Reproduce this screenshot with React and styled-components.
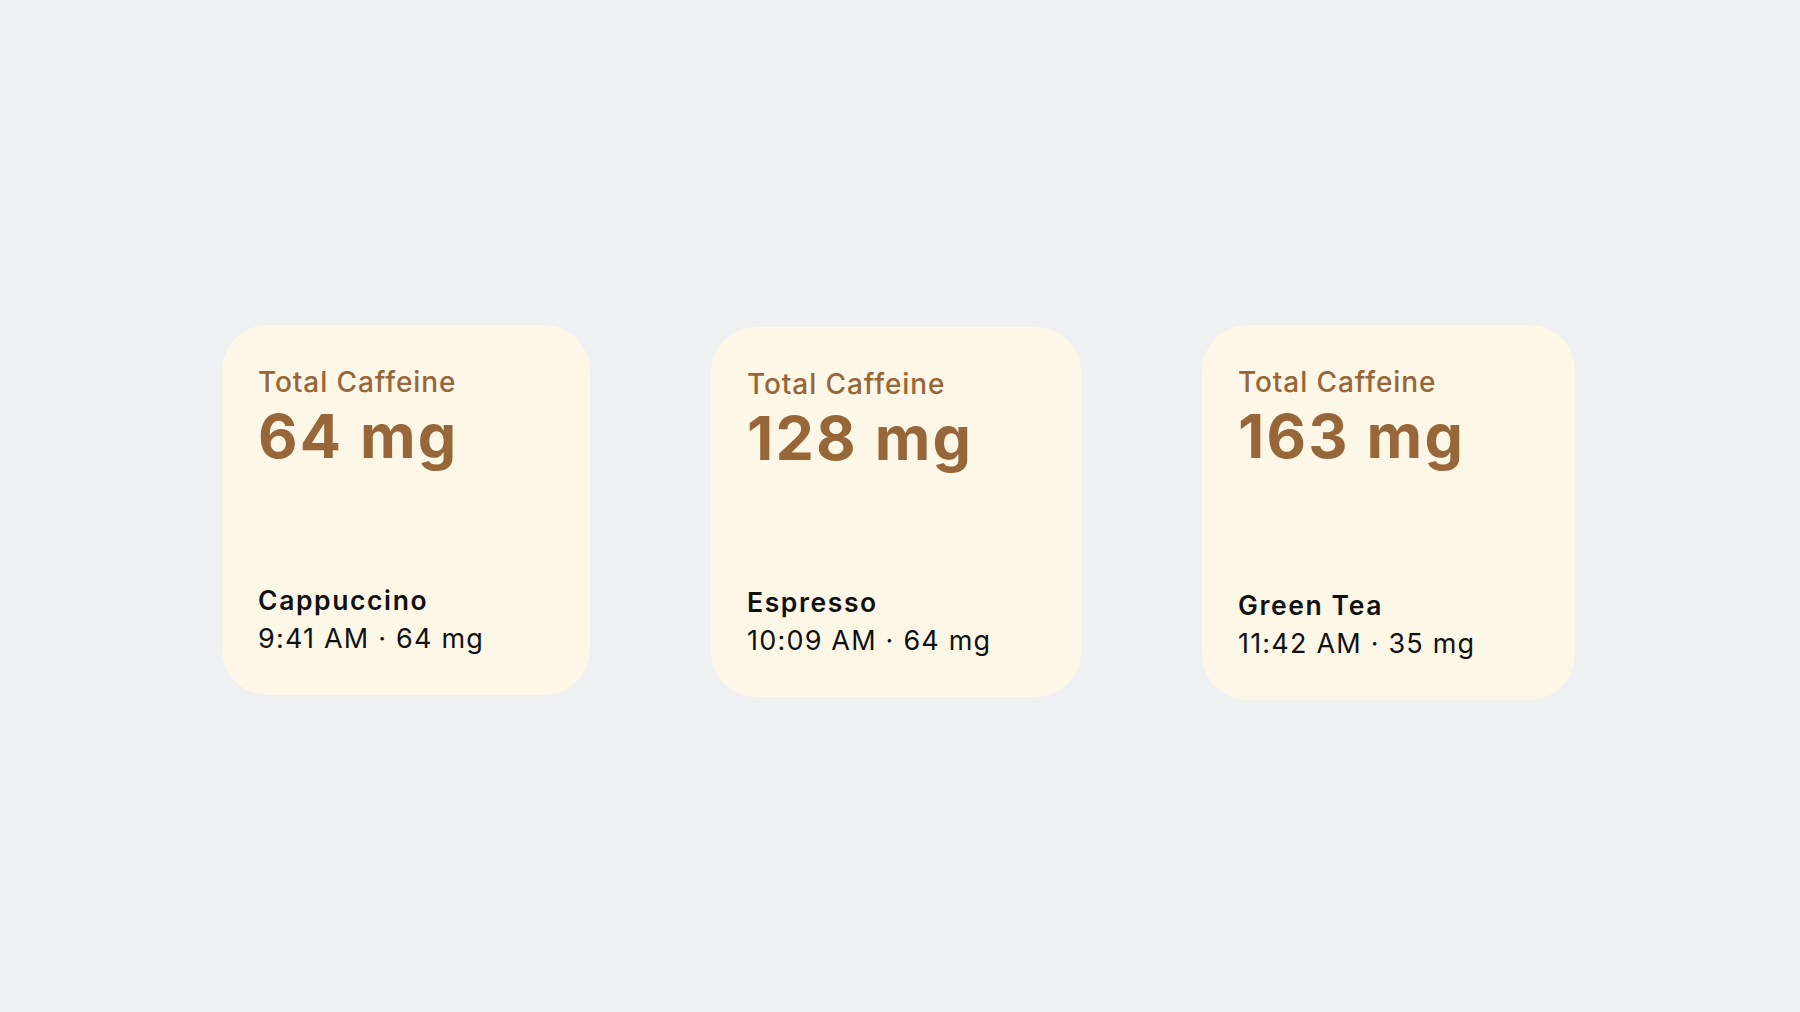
import React from 'react'
import styled, { createGlobalStyle } from 'styled-components'

const GlobalStyle = createGlobalStyle`
    html, body {
        margin: 0;
        padding: 0;
        background: #eff0f2;
    }
    body {
        font-family: Inter, "Noto Sans", "Liberation Sans", sans-serif;
        -webkit-font-smoothing: antialiased;
    }
`;

const drinks = [
    { total: 64, name: 'Cappuccino', time: '9:41 AM', amount: 64, width: 368, height: 370 },
    { total: 128, name: 'Espresso', time: '10:09 AM', amount: 64, width: 370, height: 370, offset: 2 },
    { total: 163, name: 'Green Tea', time: '11:42 AM', amount: 35, width: 373, height: 375 },
];

export default function App() {
    return (
        <Page>
            <GlobalStyle />
            <Row>
                {drinks.map(d => (
                    <Widget key={d.name} $width={d.width} $height={d.height} $offset={d.offset}>
                        <div>
                            <Label>Total Caffeine</Label>
                            <Total>{d.total} mg</Total>
                        </div>
                        <div>
                            <DrinkName>{d.name}</DrinkName>
                            <Detail>{d.time} · {d.amount} mg</Detail>
                        </div>
                    </Widget>
                ))}
            </Row>
        </Page>
    );
}

const Page = styled.main`
    width: 1800px;
    height: 1012px;
    box-sizing: border-box;
    padding-top: 325px;
    background: #eff0f2;
`;

const Row = styled.section`
    display: flex;
    justify-content: center;
    align-items: flex-start;
    gap: 121px;
    padding-right: 3px;
`;

const Widget = styled.article`
    width: ${p => p.$width}px;
    height: ${p => p.$height}px;
    margin-top: ${p => p.$offset || 0}px;
    box-sizing: border-box;
    padding: 40px 20px 39px 36px;
    border-radius: 46px;
    background: #fdf7e8;
    display: flex;
    flex-direction: column;
    justify-content: space-between;
`;

const Label = styled.div`
    font-size: 28px;
    line-height: 34px;
    font-weight: 500;
    letter-spacing: 0.9px;
    color: #976639;
`;

const Total = styled.div`
    margin-top: 5px;
    font-size: 61px;
    line-height: 64px;
    font-weight: 700;
    letter-spacing: 2.2px;
    color: #976639;
`;

const DrinkName = styled.div`
    font-size: 26.5px;
    line-height: 32px;
    font-weight: 600;
    letter-spacing: 1.6px;
    color: #111;
`;

const Detail = styled.div`
    margin-top: 6px;
    font-size: 27px;
    line-height: 34px;
    font-weight: 400;
    letter-spacing: 1.2px;
    color: #111;
`;
